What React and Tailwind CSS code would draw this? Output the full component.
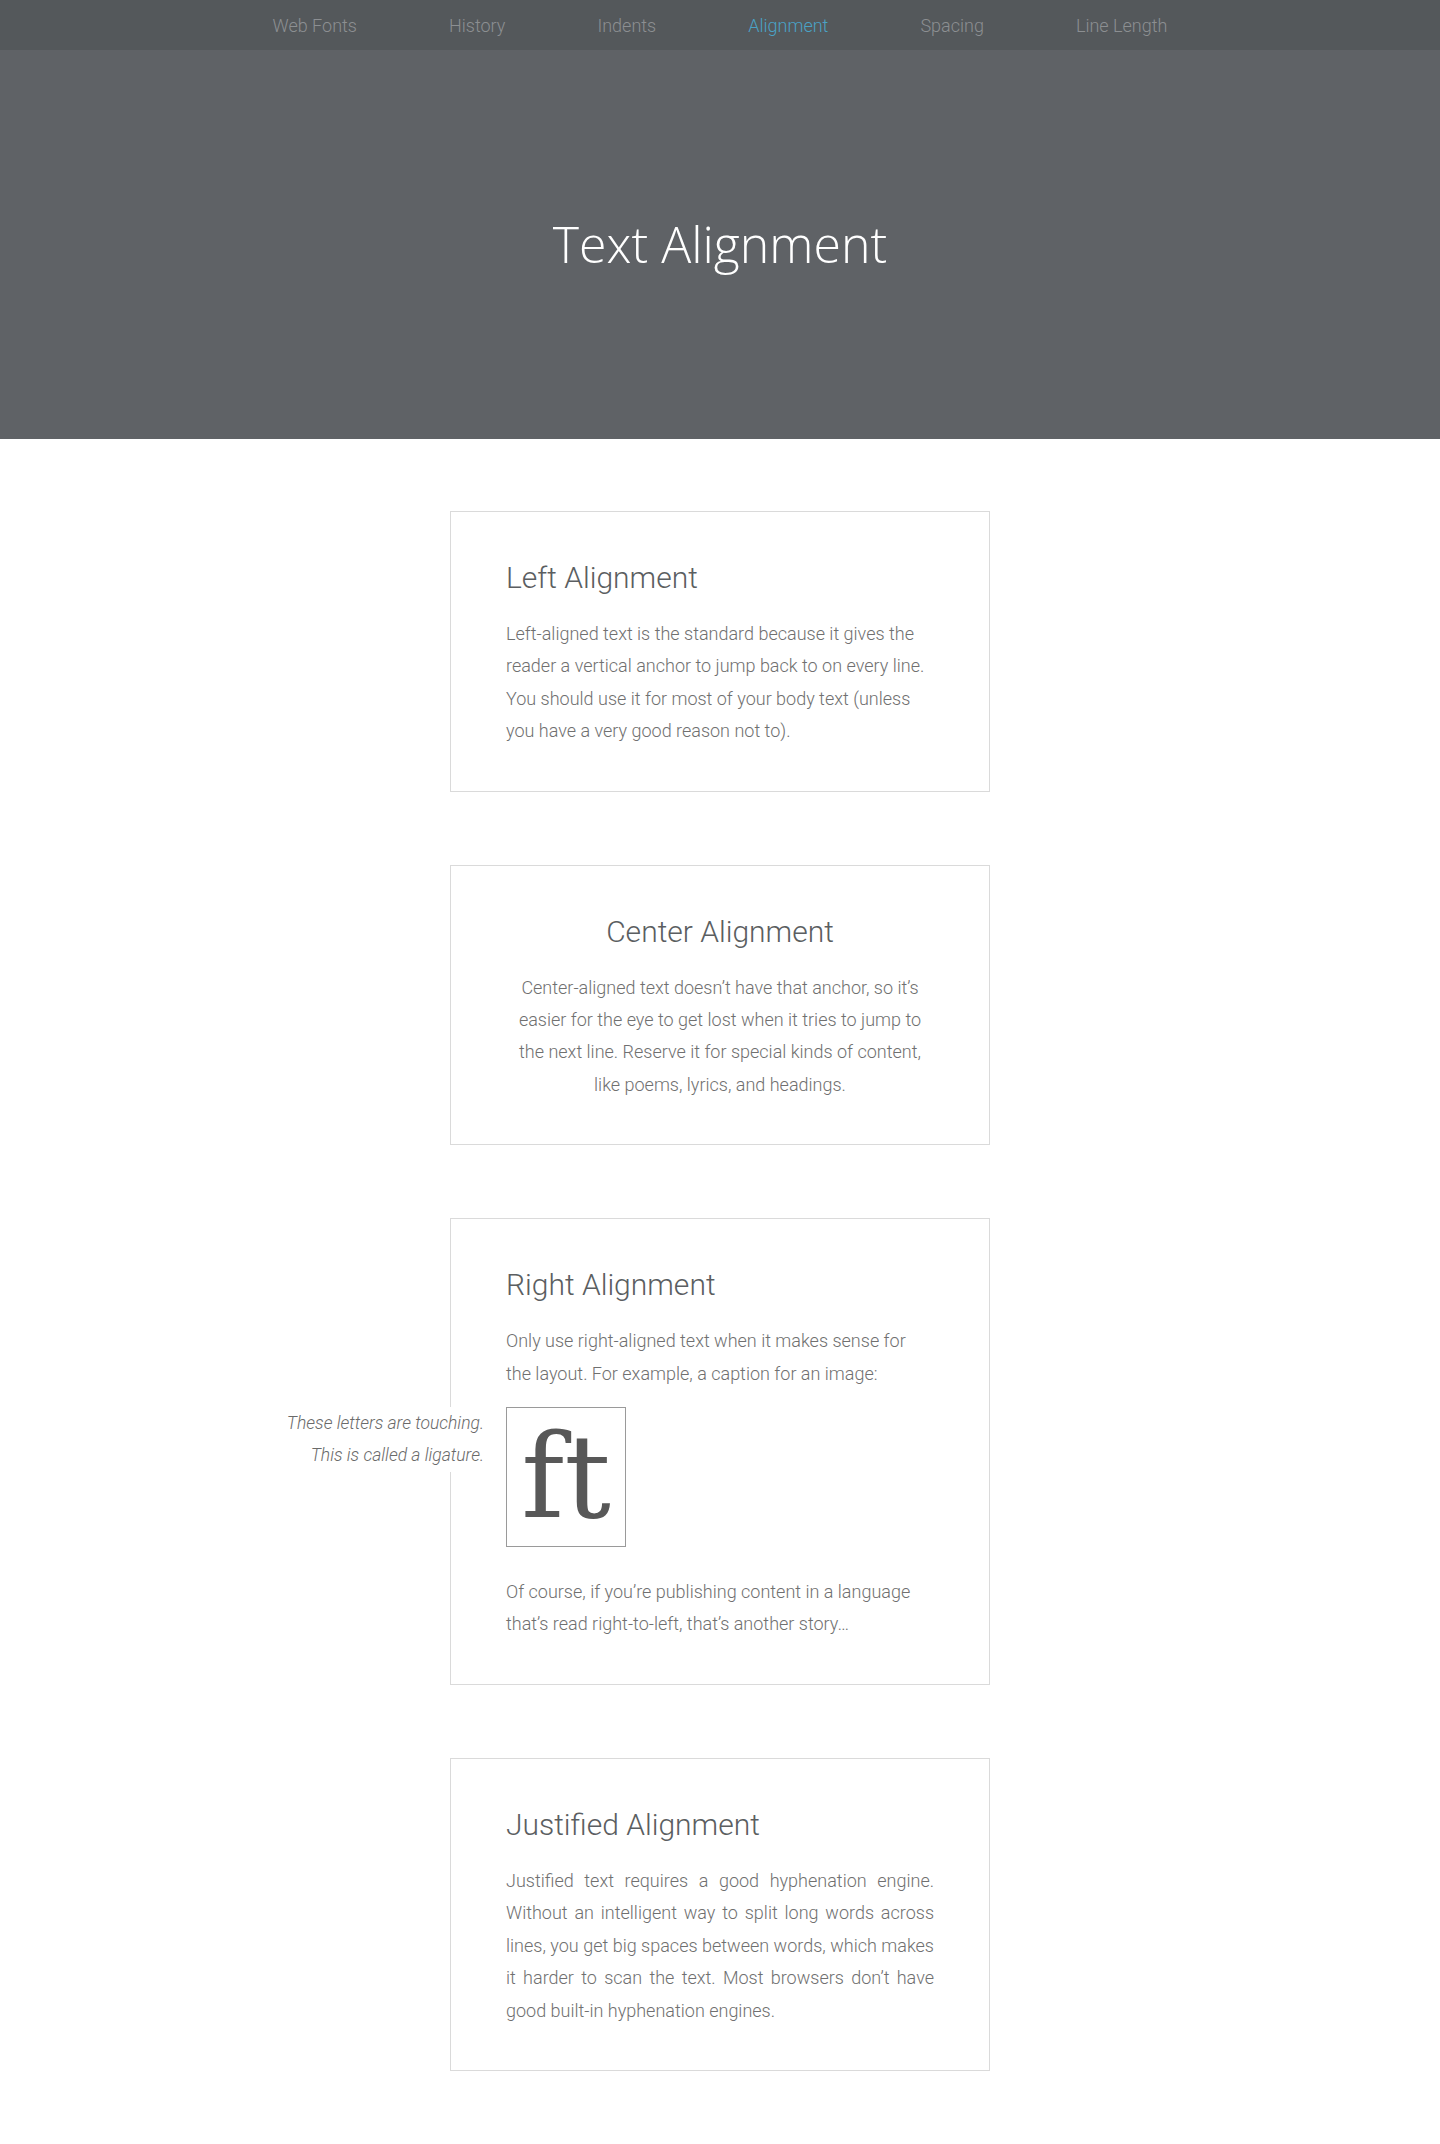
const navItems = ["Web Fonts", "History", "Indents", "Alignment", "Spacing", "Line Length"];

function Card({ title, center, children }) {
  return (
    <section
      className={`w-[540px] border border-[#dadada] bg-white px-[55px] pt-[48px] pb-[43px] ${
        center ? "text-center" : ""
      }`}
    >
      <h2 className="mb-[22px] text-[30px] leading-[36px] font-light text-[#5b5e61]">
        {title}
      </h2>
      {children}
    </section>
  );
}

export default function App() {
  return (
    <div className="min-h-[2144px] bg-white font-['Roboto',sans-serif] font-light">
      {/* Top nav */}
      <nav className="flex h-[50px] items-center justify-center gap-[92px] bg-[#54585b] text-[18px]">
        {navItems.map((item) => (
          <a
            key={item}
            href="#"
            className={item === "Alignment" ? "text-[#4aa2c6]" : "text-[#8c8f92]"}
          >
            {item}
          </a>
        ))}
      </nav>

      {/* Hero */}
      <header className="flex h-[389px] items-center justify-center bg-[#5f6266]">
        <h1 className="font-['Open_Sans',sans-serif] text-[50px] font-light text-white">
          Text Alignment
        </h1>
      </header>

      {/* Cards */}
      <main className="flex flex-col items-center gap-[73px] pt-[72px] pb-[74px] text-[18px] leading-[32.4px] text-[#707070]">
        <Card title="Left Alignment">
          <p>
            Left-aligned text is the standard because it gives the reader a vertical
            anchor to jump back to on every line. You should use it for most of your
            body text (unless you have a very good reason not to).
          </p>
        </Card>

        <Card title="Center Alignment" center>
          <p>
            Center-aligned text doesn’t have that anchor, so it’s easier for the eye to
            get lost when it tries to jump to the next line. Reserve it for special
            kinds of content, like poems, lyrics, and headings.
          </p>
        </Card>

        <Card title="Right Alignment">
          <p>
            Only use right-aligned text when it makes sense for the layout. For example,
            a caption for an image:
          </p>
          <figure className="relative mt-[17px] w-[120px]">
            <figcaption className="absolute top-0 right-[calc(100%+22px)] whitespace-nowrap bg-white pl-[60px] text-right text-[17.5px] italic text-[#6a6a6a]">
              These letters are touching.
              <br />
              This is called a ligature.
            </figcaption>
            <div className="flex h-[140px] w-[120px] items-center justify-center border border-[#9a9a9a]">
              <span className="font-['DejaVu_Serif',serif] text-[116px] leading-none font-normal text-[#585858]">
                ft
              </span>
            </div>
          </figure>
          <p className="mt-[29px]">
            Of course, if you’re publishing content in a language that’s read
            right-to-left, that’s another story…
          </p>
        </Card>

        <Card title="Justified Alignment">
          <p className="text-justify">
            Justified text requires a good hyphenation engine. Without an intelligent
            way to split long words across lines, you get big spaces between words,
            which makes it harder to scan the text. Most browsers don’t have good
            built-in hyphenation engines.
          </p>
        </Card>
      </main>
    </div>
  );
}
